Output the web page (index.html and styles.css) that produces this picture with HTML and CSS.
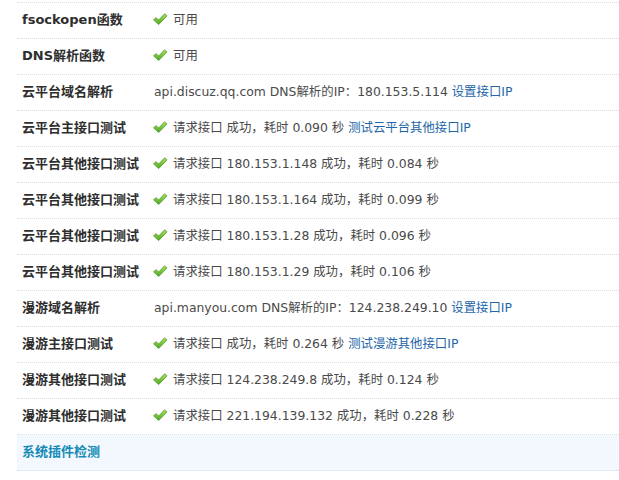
FILE: index.html
```html
<!DOCTYPE html>
<html lang="zh">
<head>
<meta charset="utf-8">
<link rel="stylesheet" href="styles.css">
</head>
<body>
<svg width="0" height="0" class="defs">
  <defs>
    <linearGradient id="g" x1="0" y1="0" x2="0" y2="1">
      <stop offset="0" stop-color="#a6e46a"/>
      <stop offset="1" stop-color="#4ea51f"/>
    </linearGradient>
    <symbol id="ok" viewBox="0 0 16 16">
      <path d="M1.5 8.8 L4.2 6.6 L6.6 9.1 L12.6 2.8 L15 4.9 L6.7 13.6 Z" fill="url(#g)" stroke="#5a9a2a" stroke-width="0.8" stroke-linejoin="round"/>
    </symbol>
  </defs>
</svg>
<div class="tb">
  <div class="row"><div class="th">fsockopen函数</div><div class="td"><svg class="ok"><use href="#ok"/></svg>可用</div></div>
  <div class="row"><div class="th">DNS解析函数</div><div class="td"><svg class="ok"><use href="#ok"/></svg>可用</div></div>
  <div class="row"><div class="th">云平台域名解析</div><div class="td">api.discuz.qq.com DNS解析的IP：180.153.5.114 <a href="#">设置接口IP</a></div></div>
  <div class="row"><div class="th">云平台主接口测试</div><div class="td"><svg class="ok"><use href="#ok"/></svg>请求接口 成功，耗时 0.090 秒 <a href="#">测试云平台其他接口IP</a></div></div>
  <div class="row"><div class="th">云平台其他接口测试</div><div class="td"><svg class="ok"><use href="#ok"/></svg>请求接口 180.153.1.148 成功，耗时 0.084 秒</div></div>
  <div class="row"><div class="th">云平台其他接口测试</div><div class="td"><svg class="ok"><use href="#ok"/></svg>请求接口 180.153.1.164 成功，耗时 0.099 秒</div></div>
  <div class="row"><div class="th">云平台其他接口测试</div><div class="td"><svg class="ok"><use href="#ok"/></svg>请求接口 180.153.1.28 成功，耗时 0.096 秒</div></div>
  <div class="row"><div class="th">云平台其他接口测试</div><div class="td"><svg class="ok"><use href="#ok"/></svg>请求接口 180.153.1.29 成功，耗时 0.106 秒</div></div>
  <div class="row"><div class="th">漫游域名解析</div><div class="td">api.manyou.com DNS解析的IP：124.238.249.10 <a href="#">设置接口IP</a></div></div>
  <div class="row"><div class="th">漫游主接口测试</div><div class="td"><svg class="ok"><use href="#ok"/></svg>请求接口 成功，耗时 0.264 秒 <a href="#">测试漫游其他接口IP</a></div></div>
  <div class="row"><div class="th">漫游其他接口测试</div><div class="td"><svg class="ok"><use href="#ok"/></svg>请求接口 124.238.249.8 成功，耗时 0.124 秒</div></div>
  <div class="row"><div class="th">漫游其他接口测试</div><div class="td"><svg class="ok"><use href="#ok"/></svg>请求接口 221.194.139.132 成功，耗时 0.228 秒</div></div>
  <div class="row partition"><div class="th">系统插件检测</div></div>
</div>
</body>
</html>
```
FILE: styles.css
```css
html, body {
  margin: 0;
  padding: 0;
  background: #fff;
}
body {
  font-family: "DejaVu Sans", "Noto Sans CJK SC", sans-serif;
  font-size: 13px;
  color: #444;
}
.defs {
  position: absolute;
  width: 0;
  height: 0;
}
.tb {
  margin: 2px 0 0 17px;
  border-top: 1px dotted #d3dfe8;
}
.row {
  display: grid;
  grid-template-columns: 137px 1fr;
  align-items: center;
  box-sizing: border-box;
  height: 36px;
  padding-bottom: 4px;
  border-bottom: 1px dotted #d3dfe8;
}
.th {
  padding-left: 5px;
  font-weight: bold;
  color: #2e2e2e;
  white-space: nowrap;
}
.td {
  display: flex;
  align-items: center;
  white-space: pre;
  font-size: 12.4px;
  color: #4a4a4a;
}
.td a {
  color: #2366a8;
  text-decoration: none;
}
.ok {
  width: 16px;
  height: 16px;
  margin: 0 5px 0 -2px;
  flex: none;
}
.partition {
  background: #f2f8fd;
}
.partition .th {
  color: #138bb6;
}
```
